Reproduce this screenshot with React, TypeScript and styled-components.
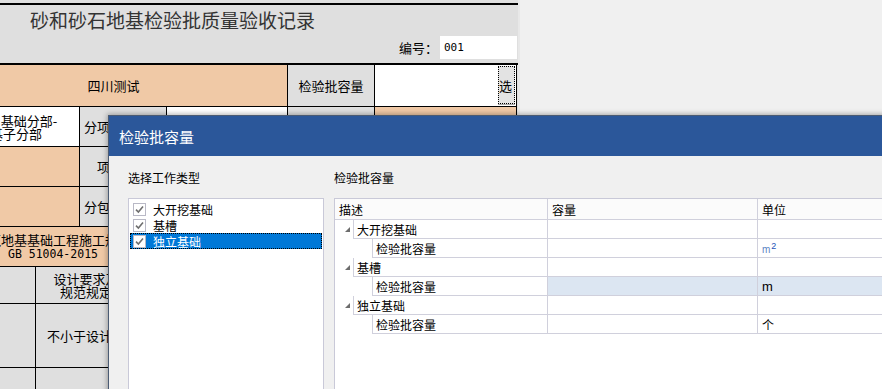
import styled, { createGlobalStyle } from "styled-components";
import { Fragment } from "react";

type Tone = "peach" | "gray" | "white";

const toneColor: Record<Tone, string> = {
    peach: "#f0c9a6",
    gray: "#dfdfdf",
    white: "#ffffff",
};

const GlobalStyle = createGlobalStyle`
    html, body {
        margin: 0;
        padding: 0;
    }
    body {
        background: #f0f0f0;
        font-family: "Noto Sans CJK SC", "Liberation Sans", sans-serif;
        overflow: hidden;
    }
`

const Screen = styled.div`
    position: relative;
    width: 882px;
    height: 389px;
    overflow: hidden;
    display: flex;
    background: #f0f0f0;
`

// the record sheet behind the dialog, scrolled a little to the right
const Sheet = styled.div`
    width: 518px;
    height: 100%;
    flex-shrink: 0;
    overflow: hidden;
    background: #dfdfdf;
    border-right: 2px solid #e8e8e8;
`
const SheetHead = styled.div`
    margin-top: 3px;
    height: 58px;
    border-top: 2px solid #000;
    border-bottom: 2px solid #000;
    display: flex;
    flex-direction: column;
`
const Title = styled.div`
    margin: 3px 0 0 30px;
    font-size: 19px;
    line-height: 24px;
    color: #333;
`
const NumberRow = styled.div`
    display: flex;
    justify-content: flex-end;
    align-items: center;
    gap: 2px;
    margin-top: 4px;
    padding-right: 1px;
    font-size: 13px;
    color: #000;
`
const NumberBox = styled.div`
    width: 77px;
    height: 23px;
    box-sizing: border-box;
    background: #fff;
    display: flex;
    align-items: center;
    padding-left: 4px;
    font-family: "DejaVu Sans Mono", monospace;
    font-size: 11px;
`
const Table = styled.div`
    display: grid;
    width: fit-content;
    margin-left: -60px;
    grid-template-columns: 95px 43px 56px 29px 120px 86px 141px;
    grid-template-rows: 41px 39px 39px 39px 39px 36px 63px 40px;
    gap: 1px;
    background: #000;
    border-right: 1px solid #000;
`
const Cell = styled.div<{ $tone: Tone; $span?: number }>`
    grid-column: span ${props => props.$span ?? 1};
    background: ${props => toneColor[props.$tone]};
    display: flex;
    align-items: center;
    justify-content: center;
    text-align: center;
    font-size: 13px;
    line-height: 13px;
    white-space: nowrap;
    overflow: hidden;
    color: #000;
`
const CellText = styled.span`
    display: block;
    text-align: center;
`
const CodeLine = styled.span`
    font-family: "DejaVu Sans Mono", monospace;
    font-size: 11.5px;
`
const PickCell = styled(Cell)`
    justify-content: flex-end;
    align-items: flex-start;
    padding: 1px 1px 0 0;
`
const PickButton = styled.div`
    width: 17px;
    height: 38px;
    box-sizing: border-box;
    background: #e3e3e3;
    border: 1px dotted #000;
    box-shadow: 0 1px 0 #a8a8a8;
    display: flex;
    align-items: center;
    overflow: hidden;
    font-size: 13px;
`

// dialog window
const Dialog = styled.div`
    position: absolute;
    left: 108px;
    top: 115px;
    width: 800px;
    height: 300px;
    border: 1px solid #4b5b73;
    background: #f0f0f0;
    box-shadow: 0 0 5px 1px rgba(0, 0, 0, 0.3);
    display: flex;
    flex-direction: column;
`
const DialogTitle = styled.div`
    height: 40px;
    flex-shrink: 0;
    background: #2b579a;
    color: #fff;
    font-size: 15px;
    display: flex;
    align-items: center;
    padding-left: 10px;
`
const DialogBody = styled.div`
    flex: 1;
    min-height: 0;
    display: grid;
    grid-template-columns: 196px 1fr;
    grid-template-rows: 16px 1fr;
    column-gap: 10px;
    row-gap: 12px;
    padding: 14px 0 0 19px;
`
const Label = styled.div`
    font-size: 12px;
    line-height: 16px;
    color: #000;
`
const ListBox = styled.div`
    background: #fff;
    border: 1px solid #c9c9d8;
    padding: 2px 0 0;
    display: flex;
    flex-direction: column;
`
const ListItem = styled.div<{ $selected?: boolean }>`
    height: 16px;
    margin: 0 1px;
    padding-left: 3px;
    display: flex;
    align-items: center;
    gap: 7px;
    font-size: 12px;
    color: ${props => props.$selected ? "#fff" : "#000"};
    background: ${props => props.$selected ? "#0078d7" : "transparent"};
    outline: ${props => props.$selected ? "1px dotted #000" : "none"};
    outline-offset: -1px;
`
const CheckBox = styled.span`
    width: 13px;
    height: 13px;
    box-sizing: border-box;
    border: 1px solid #b9b9c6;
    background: #fff;
    display: flex;
    align-items: center;
    justify-content: center;
`
const TreeGrid = styled.div`
    background: #fff;
    border: 1px solid #c9c9d8;
    display: grid;
    grid-template-columns: 213px 210px 1fr;
    grid-auto-rows: min-content;
    align-content: start;
    font-size: 12px;
    color: #000;
`
const HeadCell = styled.div`
    height: 21px;
    box-sizing: border-box;
    background: #fbfbfb;
    border-right: 1px solid #d0d0dc;
    border-bottom: 1px solid #d0d0dc;
    display: flex;
    align-items: center;
    padding-left: 4px;
`
const DescCell = styled.div`
    height: 19px;
    display: flex;
    border-right: 1px solid #d0d0dc;
`
const Indent = styled.div<{ $level: number }>`
    width: ${props => props.$level ? 37 : 18}px;
    flex-shrink: 0;
    display: flex;
    align-items: center;
    padding-left: 10px;
    box-sizing: border-box;
`
const DescText = styled.div`
    flex: 1;
    border-left: 1px solid #d0d0dc;
    border-bottom: 1px solid #d0d0dc;
    display: flex;
    align-items: center;
    padding-left: 3px;
`
const ValueCell = styled.div<{ $active?: boolean }>`
    height: 19px;
    box-sizing: border-box;
    border-right: 1px solid #d0d0dc;
    border-bottom: 1px solid #d0d0dc;
    background: ${props => props.$active ? "#dce6f2" : "#fff"};
    display: flex;
    align-items: center;
    padding-left: 4px;
`
const Unit = styled.span<{ $latin?: boolean }>`
    font-family: ${props => props.$latin ? '"Liberation Sans", sans-serif' : 'inherit'};
    font-size: ${props => props.$latin ? 13 : 12}px;
`
const AreaUnit = styled.span`
    font-family: "Liberation Sans", sans-serif;
    font-size: 10px;
    color: #5b84c4;
    sup {
        font-size: 9px;
        color: #2454b8;
        margin-left: 1px;
    }
`

interface TreeRow {
    label: string,
    level: number,
    unit?: string,
    active?: boolean
}

const workTypes = ["大开挖基础", "基槽", "独立基础"];

const treeRows: TreeRow[] = [
    { label: "大开挖基础", level: 0 },
    { label: "检验批容量", level: 1, unit: "m2" },
    { label: "基槽", level: 0 },
    { label: "检验批容量", level: 1, unit: "m", active: true },
    { label: "独立基础", level: 0 },
    { label: "检验批容量", level: 1, unit: "个" },
];

function Check() {
    return (
        <svg width="11" height="11" viewBox="0 0 11 11">
            <path d="M2 5.6 L4.4 8 L9 2.6" fill="none" stroke="#6f6f6f" strokeWidth="1.6" />
        </svg>
    )
}

function Expander() {
    return (
        <svg width="5" height="5" viewBox="0 0 5 5">
            <polygon points="5,0 5,5 0,5" fill="#6d6d6d" />
        </svg>
    )
}

function renderUnit(unit?: string) {
    if (unit === "m2") return <AreaUnit>m<sup>2</sup></AreaUnit>;
    if (unit === "m") return <Unit $latin>m</Unit>;
    if (unit) return <Unit>{unit}</Unit>;
    return null;
}

export default function App() {
    return (
        <>
            <GlobalStyle />
            <Screen>
                <Sheet>
                    <SheetHead>
                        <Title>砂和砂石地基检验批质量验收记录</Title>
                        <NumberRow>
                            编号：
                            <NumberBox>001</NumberBox>
                        </NumberRow>
                    </SheetHead>
                    <Table>
                        <Cell $tone="peach" $span={5}>四川测试</Cell>
                        <Cell $tone="gray">检验批容量</Cell>
                        <PickCell $tone="white"><PickButton>选</PickButton></PickCell>

                        <Cell $tone="white" $span={2}>
                            <CellText>地基与基础分部-<br />地基子分部</CellText>
                        </Cell>
                        <Cell $tone="gray" $span={2}>分项工程名称</Cell>
                        <Cell $tone="white" />
                        <Cell $tone="gray" />
                        <Cell $tone="peach" />

                        <Cell $tone="peach" $span={2} />
                        <Cell $tone="gray" $span={2}>项目经理</Cell>
                        <Cell $tone="peach" />
                        <Cell $tone="gray" />
                        <Cell $tone="peach" />

                        <Cell $tone="peach" $span={2} />
                        <Cell $tone="gray" $span={2}>分包单位经理</Cell>
                        <Cell $tone="peach" />
                        <Cell $tone="gray" />
                        <Cell $tone="peach" />

                        <Cell $tone="peach" $span={4}>
                            <CellText>《建筑地基基础工程施工规范》<br /><CodeLine>GB 51004-2015</CodeLine></CellText>
                        </Cell>
                        <Cell $tone="peach" $span={3} />

                        <Cell $tone="gray" />
                        <Cell $tone="gray" $span={2}>
                            <CellText>设计要求及<br />规范规定</CellText>
                        </Cell>
                        <Cell $tone="gray" $span={2} />
                        <Cell $tone="gray" $span={2} />

                        <Cell $tone="gray" />
                        <Cell $tone="gray" $span={2}>不小于设计值</Cell>
                        <Cell $tone="gray" $span={2} />
                        <Cell $tone="gray" $span={2} />

                        <Cell $tone="gray" />
                        <Cell $tone="gray" $span={2} />
                        <Cell $tone="gray" $span={2} />
                        <Cell $tone="gray" $span={2} />
                    </Table>
                </Sheet>

                <Dialog>
                    <DialogTitle>检验批容量</DialogTitle>
                    <DialogBody>
                        <Label>选择工作类型</Label>
                        <Label>检验批容量</Label>
                        <ListBox>
                            {workTypes.map((name, i) => (
                                <ListItem key={name} $selected={i === workTypes.length - 1}>
                                    <CheckBox><Check /></CheckBox>
                                    {name}
                                </ListItem>
                            ))}
                        </ListBox>
                        <TreeGrid>
                            <HeadCell>描述</HeadCell>
                            <HeadCell>容量</HeadCell>
                            <HeadCell>单位</HeadCell>
                            {treeRows.map((row, i) => (
                                <Fragment key={i}>
                                    <DescCell>
                                        <Indent $level={row.level}>{row.level === 0 && <Expander />}</Indent>
                                        <DescText>{row.label}</DescText>
                                    </DescCell>
                                    <ValueCell $active={row.active} />
                                    <ValueCell $active={row.active}>{renderUnit(row.unit)}</ValueCell>
                                </Fragment>
                            ))}
                        </TreeGrid>
                    </DialogBody>
                </Dialog>
            </Screen>
        </>
    )
}
